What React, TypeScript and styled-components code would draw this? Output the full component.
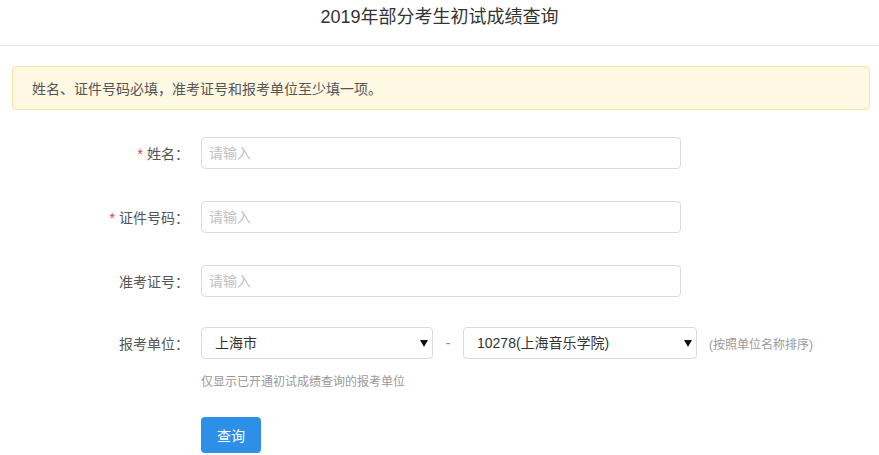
import React from 'react'
import styled, { createGlobalStyle } from 'styled-components'

const GlobalStyle = createGlobalStyle`
  html, body {
    margin: 0;
    padding: 0;
    background: #fff;
  }
  body {
    font-family: "Liberation Sans", "Noto Sans CJK SC", sans-serif;
    color: #333;
  }
  * {
    box-sizing: border-box;
  }
`

const Page = styled.div`
  width: 879px;
  min-height: 455px;
`

const Header = styled.h1`
  margin: 0;
  height: 46px;
  padding-top: 5px;
  border-bottom: 1px solid #e6e6e6;
  text-align: center;
  font-size: 18px;
  font-weight: normal;
  line-height: 24px;
  color: #333;
`

const Alert = styled.div`
  margin: 20px 9px 0 12px;
  height: 44px;
  padding: 0 19px;
  display: flex;
  align-items: center;
  background: #fff8e3;
  border: 1px solid #f6e39c;
  border-radius: 4px;
  font-size: 14px;
  color: #555;
`

const Form = styled.form`
  padding-top: 27px;
  display: flex;
  flex-direction: column;
`

const Row = styled.div<{ $gap?: number }>`
  display: flex;
  align-items: center;
  margin-bottom: ${(p) => p.$gap ?? 32}px;
`

const Label = styled.label`
  width: 201px;
  padding-right: 12px;
  text-align: right;
  font-size: 14px;
  color: #555;
  flex-shrink: 0;
`

const Star = styled.span`
  color: #e33;
  margin-right: 4px;
`

const TextInput = styled.input`
  width: 480px;
  height: 32px;
  padding: 0 7px;
  border: 1px solid #dcdcdc;
  border-radius: 4px;
  font-size: 14px;
  font-family: inherit;
  color: #333;
  outline: none;

  &::placeholder {
    color: #c0c0c0;
  }
`

const SelectWrap = styled.div<{ $width: number }>`
  position: relative;
  width: ${(p) => p.$width}px;
  height: 32px;
`

const Select = styled.select`
  appearance: none;
  width: 100%;
  height: 100%;
  padding: 0 24px 0 13px;
  border: 1px solid #dcdcdc;
  border-radius: 4px;
  background: #fff;
  font-size: 14px;
  font-family: inherit;
  color: #333;
  outline: none;
`

const Arrow = styled.svg`
  position: absolute;
  right: 5px;
  top: 13px;
  pointer-events: none;
`

const Dash = styled.span`
  width: 30px;
  text-align: center;
  font-size: 14px;
  color: #888;
`

const Note = styled.span`
  margin-left: 12px;
  font-size: 12px;
  color: #999;
`

const Help = styled.div`
  margin: 15px 0 0 201px;
  font-size: 12px;
  line-height: 17px;
  color: #999;
`

const Button = styled.button`
  margin: 26px 0 0 201px;
  width: 60px;
  height: 36px;
  border: none;
  border-radius: 4px;
  background: #2d8fe8;
  color: #fff;
  font-size: 14px;
  font-family: inherit;
  cursor: pointer;
`

const DropArrow = () => (
  <Arrow width="8" height="7" viewBox="0 0 8 7">
    <path d="M0 0 H8 L4 7 Z" fill="#111" />
  </Arrow>
)

export default function App() {
  return (
    <Page>
      <GlobalStyle />
      <Header>2019年部分考生初试成绩查询</Header>
      <Alert>姓名、证件号码必填，准考证号和报考单位至少填一项。</Alert>
      <Form onSubmit={(e) => e.preventDefault()}>
        <Row>
          <Label>
            <Star>*</Star>姓名：
          </Label>
          <TextInput placeholder="请输入" />
        </Row>
        <Row>
          <Label>
            <Star>*</Star>证件号码：
          </Label>
          <TextInput placeholder="请输入" />
        </Row>
        <Row $gap={30}>
          <Label>准考证号：</Label>
          <TextInput placeholder="请输入" />
        </Row>
        <Row $gap={0}>
          <Label>报考单位：</Label>
          <SelectWrap $width={232}>
            <Select defaultValue="sh">
              <option value="sh">上海市</option>
            </Select>
            <DropArrow />
          </SelectWrap>
          <Dash>-</Dash>
          <SelectWrap $width={234}>
            <Select defaultValue="10278">
              <option value="10278">10278(上海音乐学院)</option>
            </Select>
            <DropArrow />
          </SelectWrap>
          <Note>(按照单位名称排序)</Note>
        </Row>
        <Help>仅显示已开通初试成绩查询的报考单位</Help>
        <div>
          <Button type="submit">查询</Button>
        </div>
      </Form>
    </Page>
  )
}
